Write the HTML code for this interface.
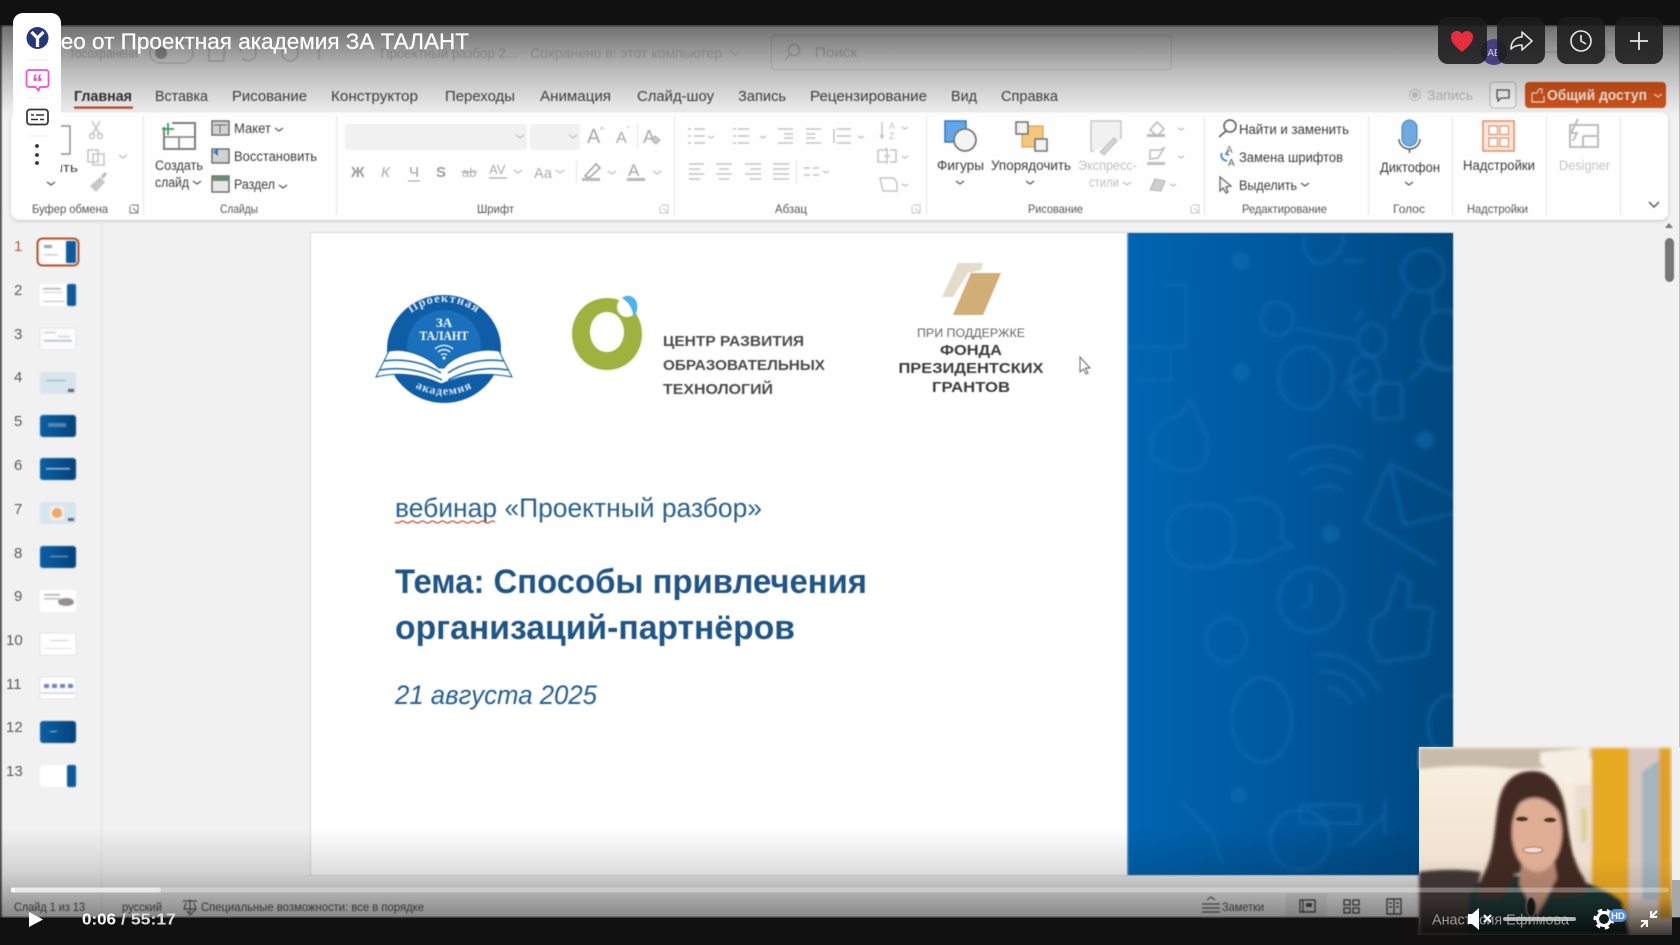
<!DOCTYPE html>
<html lang="ru"><head><meta charset="utf-8"><title>Видео от Проектная академия ЗА ТАЛАНТ</title>
<style>
html,body{margin:0;padding:0;background:#111;width:1680px;height:945px;overflow:hidden}
svg{display:block;font-family:"Liberation Sans",sans-serif}
.t{font-size:14.5px;fill:#444}
.s{font-size:12px;fill:#555}
.r{font-size:13.5px;fill:#3c3c3c}
.st{font-size:12px;fill:#555}
.ic{fill:none;stroke:#9a9a9a;stroke-width:1.5}
.ig{fill:none;stroke:#c4c4c4;stroke-width:1.5}
.sep{stroke:#e6e6e6;stroke-width:1}
.pat{fill:none;stroke:#1a72b8;stroke-opacity:.38;stroke-width:4}
.dot{fill:#1a72b8;fill-opacity:.45}
.ch{fill:none;stroke:#555;stroke-width:1.2}
.chg{fill:none;stroke:#bdbdbd;stroke-width:1.2}
</style></head><body>
<svg width="1680" height="945" viewBox="0 0 1680 945" xmlns="http://www.w3.org/2000/svg">
<defs>
<linearGradient id="top" x1="0" y1="0" x2="0" y2="1"><stop offset="0" stop-color="#000" stop-opacity=".54"/><stop offset=".5" stop-color="#000" stop-opacity=".22"/><stop offset="1" stop-color="#000" stop-opacity="0"/></linearGradient>
<linearGradient id="bot" x1="0" y1="0" x2="0" y2="1"><stop offset="0" stop-color="#000" stop-opacity="0"/><stop offset=".5" stop-color="#000" stop-opacity=".13"/><stop offset="1" stop-color="#000" stop-opacity=".44"/></linearGradient>
<linearGradient id="blue" x1="0" y1="0" x2="1" y2="0"><stop offset="0" stop-color="#0065b1"/><stop offset=".45" stop-color="#00599f"/><stop offset="1" stop-color="#00477e"/></linearGradient>
<linearGradient id="wall" x1="0" y1="0" x2="0" y2="1"><stop offset="0" stop-color="#f8f1e4"/><stop offset=".55" stop-color="#f3e3d2"/><stop offset="1" stop-color="#d8c5b4"/></linearGradient>
<linearGradient id="cam" x1="0" y1="0" x2="0" y2="1"><stop offset="0" stop-color="#000" stop-opacity="0"/><stop offset=".5" stop-color="#000" stop-opacity=".12"/><stop offset="1" stop-color="#000" stop-opacity=".72"/></linearGradient>
<linearGradient id="th" x1="0" y1="0" x2="1" y2="0"><stop offset="0" stop-color="#0b5fa5"/><stop offset="1" stop-color="#06437a"/></linearGradient>
<filter id="b1" x="-10%" y="-10%" width="120%" height="120%"><feGaussianBlur stdDeviation="2"/></filter>
<filter id="b2" x="-20%" y="-20%" width="140%" height="140%"><feGaussianBlur stdDeviation="1.6"/></filter>
<filter id="b3" x="-40%" y="-40%" width="180%" height="180%"><feGaussianBlur stdDeviation=".9"/></filter>
<filter id="sh" x="-5%" y="-20%" width="110%" height="140%"><feDropShadow dx="0" dy="1" stdDeviation="1.5" flood-color="#000" flood-opacity=".2"/></filter>
<clipPath id="cb"><rect x="1127" y="233" width="326" height="642"/></clipPath>
<path id="arcT" d="M392 352 A52 50 0 0 1 496 352"/>
<path id="arcB" d="M396 366 A50 40 0 0 0 492 366"/>
</defs>

<rect width="1680" height="945" fill="#111"/>

<!-- video -->
<g style="filter:blur(.6px)">
<rect x="0" y="26" width="1680" height="891" fill="#f1f1f1"/>
<rect x="0" y="26" width="2" height="891" fill="#6f6f6f"/>

<!-- title bar ghost -->
<g opacity=".5">
<text x="70" y="58" font-size="13.5" fill="#8a8a8a" textLength="68" lengthAdjust="spacingAndGlyphs">тосохранени</text>
<rect x="150" y="43" width="43" height="20" rx="10" fill="none" stroke="#8f8f8f"/><circle cx="161" cy="53" r="6" fill="#5f5f5f"/>
<rect x="209" y="45" width="15" height="16" fill="none" stroke="#9a9a9a" stroke-width="1.4"/>
<path d="M240 52 a8 8 0 1 1 2 6" fill="none" stroke="#a0a0a0" stroke-width="1.4"/>
<circle cx="290" cy="53" r="8" fill="none" stroke="#a0a0a0" stroke-width="1.4"/>
<path d="M312 46h14M319 46v14" fill="none" stroke="#a0a0a0" stroke-width="1.4"/>
<text x="380" y="58" font-size="13.5" fill="#9c9c9c" textLength="137" lengthAdjust="spacingAndGlyphs">Проектный разбор 2...</text>
<text x="530" y="58" font-size="13.5" fill="#a8a8a8" textLength="192" lengthAdjust="spacingAndGlyphs">Сохранено в: этот компьютер</text>
<path d="M730 51l5 4 5-4" class="chg"/>
<rect x="771.500" y="35.500" width="400" height="34" rx="3" fill="none" stroke="#bbb"/>
<circle cx="794" cy="50" r="5.500" fill="none" stroke="#9a9a9a" stroke-width="1.3"/><path d="M790 54l-5 6" stroke="#9a9a9a" stroke-width="1.3"/>
<text x="815" y="57" font-size="14" fill="#999" textLength="42" lengthAdjust="spacingAndGlyphs">Поиск</text>
<path d="M1545 52h16M1600 52h12" stroke="#888" fill="none"/>
<rect x="1595" y="46" width="11" height="11" fill="none" stroke="#999"/>
<path d="M1646 46l11 11M1657 46l-11 11" stroke="#999" fill="none"/>
</g>

<!-- tabs -->
<text x="74" y="101" class="t" font-weight="700" style="fill:#333" textLength="58" lengthAdjust="spacingAndGlyphs">Главная</text>
<rect x="74" y="106.500" width="59" height="2.200" fill="#c2461d"/>
<text x="155" y="101" class="t" textLength="53" lengthAdjust="spacingAndGlyphs">Вставка</text>
<text x="232" y="101" class="t" textLength="75" lengthAdjust="spacingAndGlyphs">Рисование</text>
<text x="331" y="101" class="t" textLength="87" lengthAdjust="spacingAndGlyphs">Конструктор</text>
<text x="445" y="101" class="t" textLength="70" lengthAdjust="spacingAndGlyphs">Переходы</text>
<text x="540" y="101" class="t" textLength="71" lengthAdjust="spacingAndGlyphs">Анимация</text>
<text x="637" y="101" class="t" textLength="77" lengthAdjust="spacingAndGlyphs">Слайд-шоу</text>
<text x="738" y="101" class="t" textLength="48" lengthAdjust="spacingAndGlyphs">Запись</text>
<text x="810" y="101" class="t" textLength="117" lengthAdjust="spacingAndGlyphs">Рецензирование</text>
<text x="951" y="101" class="t" textLength="26" lengthAdjust="spacingAndGlyphs">Вид</text>
<text x="1001" y="101" class="t" textLength="57" lengthAdjust="spacingAndGlyphs">Справка</text>

<circle cx="1415" cy="95" r="5.500" fill="none" stroke="#c8c8c8"/><circle cx="1415" cy="95" r="3" fill="#c8c8c8"/>
<text x="1427" y="100" font-size="14" fill="#bcbcbc" textLength="46" lengthAdjust="spacingAndGlyphs">Запись</text>
<rect x="1490" y="82" width="26" height="26" rx="4" fill="#f8f8f8" stroke="#bdbdbd"/>
<path d="M1497 90h12v8h-8l-3 3v-3h-1z" fill="none" stroke="#555" stroke-width="1.300"/>
<rect x="1525" y="82" width="141" height="26" rx="4" fill="#d2541a"/>
<path d="M1532 93h5l2-4h3v4h-1M1532 93v9h12v-6" fill="none" stroke="#fff" stroke-opacity=".85" stroke-width="1.200"/>
<text x="1547" y="100" font-size="14.500" font-weight="700" fill="#fff" fill-opacity=".9" textLength="100" lengthAdjust="spacingAndGlyphs">Общий доступ</text>
<path d="M1654 94l4 3 4-3" fill="none" stroke="#fff" stroke-opacity=".8" stroke-width="1.200"/>

<!-- ribbon -->
<rect x="11" y="112" width="1657" height="108" rx="8" fill="#fefefe" filter="url(#sh)"/>
<g class="sep">
<path d="M143.500 116v99M336.500 116v99M674.500 116v99M926.500 116v99M1204.500 116v99M1368.500 116v99M1452.500 116v99M1546.500 116v99M1620.500 116v99"/>
</g>

<!-- clipboard -->
<rect x="56" y="126" width="14" height="28" fill="none" stroke="#8a8a8a" stroke-width="1.400"/>
<text x="46" y="172" font-size="13" fill="#444" textLength="32" lengthAdjust="spacingAndGlyphs">вить</text>
<path d="M47 182l4 3 4-3" class="ch"/>
<path d="M92 121l8 14M100 121l-8 14" class="ig"/><circle cx="92" cy="136" r="2.500" class="ig"/><circle cx="100" cy="136" r="2.500" class="ig"/>
<rect x="88" y="150" width="10" height="12" class="ig"/><rect x="93" y="154" width="11" height="11" class="ig"/>
<path d="M119 155l4 3 4-3" class="chg"/>
<path d="M90 186l10-9 5 5-9 10z" fill="#c8c8c8"/><path d="M101 176l4-4 2 2-4 5z" fill="#bbb"/>
<text x="32" y="213" class="s" textLength="76" lengthAdjust="spacingAndGlyphs">Буфер обмена</text>
<path d="M131 205h7v8h-8v-7M133 208l4 4" fill="none" stroke="#777"/>

<!-- slides -->
<path d="M172 123h23v26h-31v-22" fill="none" stroke="#7d7d7d" stroke-width="2"/><path d="M164 137h31M179 137v12" stroke="#7d7d7d" stroke-width="1.600"/>
<path d="M162 129h12M168 123v12" stroke="#3e9a66" stroke-width="1.800"/>
<text x="155" y="170" class="r" textLength="48" lengthAdjust="spacingAndGlyphs">Создать</text>
<text x="155" y="187" class="r" textLength="34" lengthAdjust="spacingAndGlyphs">слайд</text>
<path d="M193 181l4 3 4-3" class="ch"/>
<rect x="212" y="121" width="17" height="14" fill="#d2d2d2" stroke="#666" stroke-width="1.400"/><path d="M214 125h13M220 125v8" stroke="#666"/>
<text x="234" y="133" class="r" textLength="37" lengthAdjust="spacingAndGlyphs">Макет</text>
<path d="M275 128l4 3 4-3" class="ch"/>
<rect x="212" y="149" width="17" height="14" fill="#d2d2d2" stroke="#666" stroke-width="1.400"/><path d="M213 152l5-4v8z" fill="#3b78c4"/>
<text x="234" y="161" class="r" textLength="83" lengthAdjust="spacingAndGlyphs">Восстановить</text>
<rect x="212" y="176" width="17" height="16" fill="#e8e8e8" stroke="#666" stroke-width="1.400"/><rect x="212" y="176" width="17" height="5" fill="#6c8c78"/>
<text x="234" y="189" class="r" textLength="41" lengthAdjust="spacingAndGlyphs">Раздел</text>
<path d="M279 185l4 3 4-3" class="ch"/>
<text x="220" y="213" class="s" textLength="38" lengthAdjust="spacingAndGlyphs">Слайды</text>

<!-- font -->
<rect x="345" y="124" width="182" height="26" rx="3" fill="#f1f1f1"/>
<rect x="530" y="124" width="50" height="26" rx="3" fill="#f1f1f1"/>
<path d="M516 135l4 3 4-3M569 135l4 3 4-3" class="chg"/>
<text x="587" y="143" font-size="20" fill="#a8a8a8">A</text><text x="600" y="133" font-size="9" fill="#a8a8a8">^</text>
<text x="616" y="143" font-size="16" fill="#a8a8a8">A</text><text x="627" y="133" font-size="9" fill="#a8a8a8">ˇ</text>
<path class="sep" d="M637.500 124v24"/>
<text x="643" y="143" font-size="18" fill="#aaa">A</text><path d="M655 136l5 4-4 4-4-4z" fill="#d6c8c8" stroke="#aaa"/>
<text x="351" y="177" font-size="15" font-weight="700" fill="#9a9a9a">Ж</text>
<text x="381" y="177" font-size="15" font-style="italic" fill="#a8a8a8">К</text>
<text x="409" y="177" font-size="15" fill="#a0a0a0">Ч</text><path d="M408 181h12" stroke="#a0a0a0"/>
<text x="436" y="177" font-size="15" font-weight="700" fill="#a0a0a0">S</text>
<text x="462" y="177" font-size="13" fill="#b0b0b0">ab</text><path d="M461 172h16" stroke="#aaa"/>
<text x="489" y="174" font-size="13" fill="#aaa">AV</text><path d="M489 178h18" stroke="#aaa" stroke-width="1.200"/>
<path d="M514 170l4 3 4-3" class="chg"/>
<text x="534" y="178" font-size="14.500" fill="#aaa">Аа</text>
<path d="M556 170l4 3 4-3" class="chg"/>
<path class="sep" d="M576.500 160v24"/>
<path d="M585 176l11-12 4 4-11 10z" fill="none" stroke="#a0a0a0" stroke-width="1.500"/><rect x="582" y="178" width="18" height="3" fill="#b8b8b8"/>
<path d="M608 171l4 3 4-3" class="chg"/>
<text x="628" y="176" font-size="17" fill="#a8a8a8">A</text><rect x="627" y="178" width="18" height="3" fill="#b8b8b8"/>
<path d="M653 171l4 3 4-3" class="chg"/>
<text x="477" y="213" class="s" textLength="37" lengthAdjust="spacingAndGlyphs">Шрифт</text>
<path d="M661 205h7v8h-8v-7M663 208l4 4" fill="none" stroke="#c4c4c4"/>

<!-- paragraph -->
<g class="ig">
<path d="M688 129h3M688 136h3M688 143h3M694 129h11M694 136h11M694 143h11"/>
<path d="M733 129h3M733 136h3M733 143h3M738 129h11M738 136h11M738 143h11"/>
<path d="M778 129h15M784 134h9M784 138h9M778 143h15"/>
<path d="M806 129h15M806 134h9M806 138h9M806 143h15"/>
<path d="M834 129v14M837 129h14M837 136h14M837 143h14"/>
<path d="M689 164h15M689 169h11M689 174h15M689 179h11"/>
<path d="M716 164h16M719 169h10M716 174h16M719 179h10"/>
<path d="M745 164h16M750 169h11M745 174h16M750 179h11"/>
<path d="M773 164h16M773 169h16M773 174h16M773 179h16"/>
<path d="M804 168h6M813 168h6M804 175h6M813 175h6"/>
<path d="M882 122v16M880 135l2 3 2-3"/>
<path d="M878 150h8v-2M890 150h6v12h-6M886 162h-8v-12M887 148v16M884 156h6"/>
<path d="M880 178h14l3 5v8h-14z"/>
</g>
<text x="889" y="129" font-size="9" fill="#c0c0c0">A</text><text x="889" y="139" font-size="9" fill="#c0c0c0">Z</text>
<path d="M708 136l3 2 3-2M760 136l3 2 3-2M858 136l3 2 3-2M823 171l3 2 3-2M902 127l3 2 3-2M902 156l3 2 3-2M902 184l3 2 3-2" class="chg"/>
<path class="sep" d="M796.500 160v24"/>
<text x="775" y="213" class="s" textLength="32" lengthAdjust="spacingAndGlyphs">Абзац</text>
<path d="M913 205h7v8h-8v-7M915 208l4 4" fill="none" stroke="#c4c4c4"/>

<!-- drawing -->
<rect x="945" y="121" width="21" height="21" fill="#62a8e8" stroke="#2e78c8" stroke-width="1.500"/>
<circle cx="965" cy="140" r="11" fill="#f4f4f4" stroke="#777" stroke-width="1.800"/>
<text x="937" y="170" class="r" textLength="47" lengthAdjust="spacingAndGlyphs">Фигуры</text>
<path d="M956 181l4 3 4-3" class="ch" stroke-width="1.500"/>
<rect x="1022" y="126" width="21" height="21" fill="#f4c77c" stroke="#d79a40"/>
<rect x="1016" y="122" width="12" height="12" fill="#f2f2f2" stroke="#777" stroke-width="1.600"/>
<rect x="1035" y="139" width="12" height="12" fill="#f2f2f2" stroke="#777" stroke-width="1.600"/>
<text x="991" y="170" class="r" textLength="80" lengthAdjust="spacingAndGlyphs">Упорядочить</text>
<path d="M1026 181l4 3 4-3" class="ch" stroke-width="1.500"/>
<path d="M1094 151h-3v-30h30v18" fill="#f1f1f1" stroke="#c8c8c8" stroke-width="1.500"/>
<path d="M1100 152l14-14 3 3-13 14z" fill="#d4d4d4" stroke="#bbb"/>
<text x="1078" y="170" font-size="13.500" fill="#c2c2c2" textLength="59" lengthAdjust="spacingAndGlyphs">Экспресс-</text>
<text x="1089" y="187" font-size="13.500" fill="#c2c2c2" textLength="30" lengthAdjust="spacingAndGlyphs">стили</text>
<path d="M1123 182l4 3 4-3" class="chg"/>
<path d="M1150 130l7-8 7 7-7 7z" fill="none" stroke="#b8b8b8" stroke-width="1.500"/><rect x="1147" y="134" width="18" height="3" fill="#bbb"/>
<path d="M1150 159v-9h10l4-2-6 10z" fill="none" stroke="#bbb" stroke-width="1.500"/><rect x="1147" y="162" width="18" height="3" fill="#c0c0c0"/>
<path d="M1150 190l5-11 10 2-4 10z" fill="#cfcfcf" stroke="#b4b4b4"/>
<path d="M1178 128l3 2 3-2M1178 156l3 2 3-2M1170 184l3 2 3-2" class="chg"/>
<text x="1028" y="213" class="s" textLength="55" lengthAdjust="spacingAndGlyphs">Рисование</text>
<path d="M1192 205h7v8h-8v-7M1194 208l4 4" fill="none" stroke="#c4c4c4"/>

<!-- editing -->
<circle cx="1230" cy="126" r="6" fill="none" stroke="#555" stroke-width="1.500"/><path d="M1226 131l-7 6" stroke="#555" stroke-width="1.500"/>
<text x="1239" y="134" class="r" textLength="110" lengthAdjust="spacingAndGlyphs">Найти и заменить</text>
<path d="M1222 153c-2 3 0 7 5 8M1228 151l-2 3 3 1" fill="none" stroke="#3f8ad0" stroke-width="1.800"/><text x="1226" y="153" font-size="10" fill="#777">A</text><text x="1228" y="166" font-size="10" fill="#555">A</text>
<text x="1239" y="162" class="r" textLength="104" lengthAdjust="spacingAndGlyphs">Замена шрифтов</text>
<path d="M1220 177l11 9-5 1 2 5-2 1-3-5-3 3z" fill="#f6f6f6" stroke="#666" stroke-width="1.300"/>
<text x="1239" y="190" class="r" textLength="58" lengthAdjust="spacingAndGlyphs">Выделить</text>
<path d="M1301 183l4 3 4-3" class="ch"/>
<text x="1242" y="213" class="s" textLength="85" lengthAdjust="spacingAndGlyphs">Редактирование</text>

<!-- voice -->
<rect x="1402" y="120" width="15" height="26" rx="7.500" fill="#6fa9e0" stroke="#3f7fc6"/>
<path d="M1399 139a10.500 10 0 0 0 21 0M1409.500 149v4" fill="none" stroke="#5e5e5e" stroke-width="1.500"/>
<text x="1380" y="172" class="r" textLength="60" lengthAdjust="spacingAndGlyphs">Диктофон</text>
<path d="M1405 182l4 3 4-3" class="ch" stroke-width="1.500"/>
<text x="1393" y="213" class="s" textLength="32" lengthAdjust="spacingAndGlyphs">Голос</text>

<!-- addins -->
<rect x="1483" y="121" width="31" height="30" fill="#fce8de" stroke="#e88a60" stroke-width="1.500"/>
<rect x="1489" y="126" width="8.500" height="8.500" fill="#fff" stroke="#e08050"/><rect x="1500" y="126" width="8.500" height="8.500" fill="#fff" stroke="#e08050"/>
<rect x="1489" y="138" width="8.500" height="8.500" fill="#fff" stroke="#e08050"/><rect x="1500" y="138" width="8.500" height="8.500" fill="#fff" stroke="#e08050"/>
<text x="1463" y="170" class="r" textLength="72" lengthAdjust="spacingAndGlyphs">Надстройки</text>
<text x="1467" y="213" class="s" textLength="61" lengthAdjust="spacingAndGlyphs">Надстройки</text>
<path d="M1570 125h28v22h-28zM1583 136h15M1583 136v11M1578 119l-7 14h6l-4 8" fill="none" stroke="#bcbcbc" stroke-width="2"/>
<text x="1559" y="170" font-size="13.500" fill="#c4c4c4" textLength="51" lengthAdjust="spacingAndGlyphs">Designer</text>
<path d="M1649 202l5 5 5-5" fill="none" stroke="#555" stroke-width="1.400"/>

<!-- left pane -->
<path d="M101.500 222v695" stroke="#e3e3e3"/>
<g font-size="15" fill="#5c5c5c">
<text x="14" y="251" fill="#c8563a">1</text><text x="14" y="295">2</text><text x="14" y="339">3</text><text x="14" y="382">4</text><text x="14" y="426">5</text><text x="14" y="470">6</text><text x="14" y="514">7</text><text x="14" y="558">8</text><text x="14" y="601">9</text><text x="6" y="645">10</text><text x="6" y="689">11</text><text x="6" y="732">12</text><text x="6" y="776">13</text>
</g>
<rect x="37.500" y="238.500" width="41" height="27" rx="5" fill="none" stroke="#b8552e" stroke-width="2"/>
<g style="filter:blur(.6px)">
<rect x="40" y="241" width="36" height="22" rx="2" fill="#fff"/><rect x="66" y="241" width="10" height="22" rx="1" fill="#0b5a9c"/><rect x="44" y="245" width="8" height="3" fill="#8ca0bc"/><rect x="44" y="254" width="14" height="1.500" fill="#ccc"/>
<rect x="40" y="284" width="36" height="22" rx="2" fill="#fff"/><rect x="67" y="284" width="9" height="22" rx="2" fill="#0b5a9c"/><rect x="43" y="288" width="18" height="1.500" fill="#aab"/><rect x="43" y="292" width="20" height="1" fill="#ccc"/><rect x="43" y="301" width="22" height="1" fill="#bbb"/>
<rect x="40" y="328" width="36" height="22" rx="2" fill="#fbfbfb" stroke="#e4e4e4"/><rect x="44" y="340" width="28" height="1.500" fill="#a8b8c8"/><rect x="44" y="332" width="12" height="1" fill="#bbb"/><rect x="58" y="336" width="12" height="1" fill="#bbb"/>
<rect x="40" y="372" width="36" height="22" rx="3" fill="#d7e5ee"/><rect x="46" y="380" width="20" height="1" fill="#8fa9c0"/><rect x="68" y="389" width="6" height="3" fill="#567"/>
<rect x="40" y="415" width="36" height="22" rx="3" fill="url(#th)"/><rect x="48" y="423" width="18" height="4" fill="#4f86b4"/>
<rect x="40" y="458" width="36" height="22" rx="3" fill="url(#th)"/><rect x="46" y="468" width="24" height="1.500" fill="#a8c4da"/>
<rect x="40" y="502" width="36" height="22" rx="3" fill="#d7e5ee"/><rect x="50" y="506" width="14" height="14" rx="2" fill="#f4f0ea"/><circle cx="57" cy="513" r="5" fill="#f0a56a"/><rect x="68" y="518" width="6" height="3" fill="#567"/>
<rect x="40" y="546" width="36" height="22" rx="3" fill="url(#th)"/><rect x="50" y="556" width="18" height="1" fill="#8fb2cf"/>
<rect x="40" y="590" width="36" height="22" rx="2" fill="#fff"/><rect x="44" y="594" width="16" height="1.500" fill="#aaa"/><rect x="44" y="598" width="16" height="1.500" fill="#bbb"/><ellipse cx="66" cy="602" rx="8" ry="4" fill="#9a8c96"/>
<rect x="40" y="633" width="36" height="22" rx="2" fill="#fff" stroke="#e4e4e4"/><rect x="50" y="640" width="18" height="1" fill="#ccc"/><rect x="44" y="648" width="28" height="1" fill="#ddd"/>
<rect x="40" y="677" width="36" height="22" rx="2" fill="#fff" stroke="#e4e4e4"/><path d="M44 686h5M52 686h5M60 686h5M68 686h5" stroke="#7080b8" stroke-width="4"/><path d="M41 693h34" stroke="#bbb"/>
<rect x="40" y="721" width="36" height="22" rx="3" fill="url(#th)"/><rect x="50" y="731" width="7" height="1" fill="#a9c5dc"/>
<rect x="40" y="765" width="36" height="22" rx="3" fill="#fff"/><rect x="67" y="765" width="9" height="22" rx="2" fill="#0b5a9c"/>
</g>

<!-- slide -->
<rect x="310.500" y="232.500" width="1143" height="643" fill="none" stroke="#dadada"/>
<rect x="311" y="233" width="816" height="642" fill="#fff"/>
<rect x="1127" y="233" width="326" height="642" fill="url(#blue)"/>
<g clip-path="url(#cb)"><g filter="url(#b1)">
<g class="pat">
<path d="M1305 234c-3 15 2 28 14 29 14 0 25-12 24-29"/><path d="M1343 261h22"/><circle cx="1423" cy="271" r="21"/>
<path d="M1408 290l-16 30M1432 290l2 22"/><path d="M1164 285h22v62h-60" /><path d="M1171 350v30h-35"/>
<ellipse cx="1277" cy="319" rx="16" ry="17"/><path d="M1295 328l60 12"/><path d="M1356 320l7-10"/><ellipse cx="1372" cy="340" rx="14" ry="16"/>
<ellipse cx="1306" cy="378" rx="27" ry="31"/><path d="M1340 385l28-15"/><ellipse cx="1365" cy="375" rx="15" ry="20"/><path d="M1347 388l15 20"/>
<rect x="1374" y="383" width="28" height="36" rx="5"/><path d="M1410 380l16-15"/><path d="M1416 360l35 10"/><ellipse cx="1444" cy="340" rx="22" ry="30"/>
<path d="M1190 400l-10 15c-22 5-33 22-28 40 4 12 30 20 48 12 10-10 10-30 2-42z"/>
<path d="M1288 460c20-18 55-18 75-2M1300 475c15-12 38-12 52 0M1312 490c10-6 22-6 30 0"/>
<path d="M1389 463l-24 58 72 44M1389 463l67 34M1389 463l15 62 52-12"/>
<rect x="1168" y="505" width="66" height="62" rx="24"/><path d="M1236 502c20-8 42 0 46 16v20l10 8-18 4c-8 12-30 14-52 10"/>
<circle cx="1311" cy="600" r="32"/><path d="M1311 582v22l-10 4"/>
<path d="M1398 575l12 8-2 24h16c8 0 10 4 8 8l-4 35c0 4-6 7-12 7l-36 5-10-20 2-22 14-8z"/>
<ellipse cx="1226" cy="640" rx="20" ry="22"/>
<path d="M1314 655c28-4 52 12 66 36M1320 672c18-2 36 6 44 26M1327 688c10 0 18 6 24 16"/>
<ellipse cx="1262" cy="720" rx="30" ry="42"/><ellipse cx="1450" cy="725" rx="22" ry="30"/>
<path d="M1300 805h60M1300 805v18h60v-18M1385 815l-36 32M1385 800v35"/><circle cx="1300" cy="840" r="30"/><path d="M1180 800l32 34 10 30"/>
</g>
<circle class="dot" cx="1241" cy="261" r="9"/><circle class="dot" cx="1241" cy="372" r="9"/><circle class="dot" cx="1425" cy="440" r="9"/><circle class="dot" cx="1331" cy="534" r="9"/><circle class="dot" cx="1239" cy="795" r="8"/>
</g></g>
<rect x="1127" y="233" width="1.500" height="642" fill="#4aa0dc"/>

<!-- badge logo -->
<ellipse cx="444" cy="349" rx="57" ry="54" fill="#0e5da6"/>
<ellipse cx="444" cy="346" rx="37" ry="36" fill="#1a70ba"/>
<text font-family="Liberation Serif,serif" font-size="12.500" font-weight="700" fill="#dbe8f4" letter-spacing="1"><textPath href="#arcT" startOffset="50%" text-anchor="middle">Проектная</textPath></text>
<text x="444" y="327" text-anchor="middle" font-family="Liberation Serif,serif" font-size="13" font-weight="700" fill="#fff">ЗА</text>
<text x="444" y="340" text-anchor="middle" font-family="Liberation Serif,serif" font-size="13" font-weight="700" fill="#fff" textLength="49" lengthAdjust="spacingAndGlyphs">ТАЛАНТ</text>
<path d="M435 349a13 13 0 0 1 18 0M438 352a9 9 0 0 1 12 0M441 355a5 5 0 0 1 6 0" fill="none" stroke="#fff" stroke-width="1.300"/><circle cx="444" cy="358" r="1.500" fill="#fff"/>
<path d="M439 368c-14-14-36-20-50-17l-13 26c20-5 44-3 63 6 2 1 3 1 5 0 19-9 43-11 68-6l-13-26c-18-3-44 3-55 17z" fill="#fff" stroke="#0e5da6" stroke-width="1"/>
<path d="M384 361c20-3 42 2 57 12M380 370c22-4 44 1 62 10M504 361c-20-3-42 2-56 12M508 370c-22-4-44 1-60 10" fill="none" stroke="#1568ae" stroke-width="1.500"/>
<text font-family="Liberation Serif,serif" font-size="12" font-weight="700" fill="#dbe8f4" letter-spacing="1"><textPath href="#arcB" startOffset="50%" text-anchor="middle">академия</textPath></text>

<!-- ring logo -->
<path fill-rule="evenodd" d="M607 298c20 0 35 16 35 36s-15 36-35 36-35-16-35-36 15-36 35-36zm0 14c-10 0-17 9-17 20s7 20 17 20 17-9 17-20-7-20-17-20z" fill="#9fb240"/>
<circle cx="627" cy="307" r="10" fill="#fff"/>
<path d="M622 298c6-5 14-1 15 6s-1 10-4 12c0-8-5-14-11-18z" fill="#4db2ea"/>
<g font-weight="700" fill="#4c4c4c" font-size="15">
<text x="663" y="346" textLength="141" lengthAdjust="spacingAndGlyphs">ЦЕНТР РАЗВИТИЯ</text>
<text x="663" y="370" textLength="162" lengthAdjust="spacingAndGlyphs">ОБРАЗОВАТЕЛЬНЫХ</text>
<text x="663" y="394" textLength="110" lengthAdjust="spacingAndGlyphs">ТЕХНОЛОГИЙ</text>
</g>

<!-- FPG logo -->
<path d="M958 263h25l-2 7-13 3-15 24h-11z" fill="#e4dccb"/>
<path d="M971 273h30l-18 42h-30z" fill="#d0ae76"/>
<text x="971" y="337" text-anchor="middle" font-size="12" fill="#666" textLength="108" lengthAdjust="spacingAndGlyphs">ПРИ ПОДДЕРЖКЕ</text>
<g font-weight="700" fill="#3c3c3c" font-size="15" text-anchor="middle">
<text x="971" y="355" textLength="62" lengthAdjust="spacingAndGlyphs">ФОНДА</text>
<text x="971" y="373" textLength="145" lengthAdjust="spacingAndGlyphs">ПРЕЗИДЕНТСКИХ</text>
<text x="971" y="392" textLength="78" lengthAdjust="spacingAndGlyphs">ГРАНТОВ</text>
</g>
<path d="M1080 357v15l3.500-3 2.500 5 2-1-2.500-5h4.500z" fill="#fff" stroke="#666"/>

<!-- slide text -->
<text x="395" y="517" font-size="27" fill="#265f91" textLength="367" lengthAdjust="spacingAndGlyphs">вебинар «Проектный разбор»</text>
<path d="M395 522q2.500 2 5 0t5 0 5 0 5 0 5 0 5 0 5 0 5 0 5 0 5 0 5 0 5 0 5 0 5 0 5 0 5 0 5 0 5 0 5 0 5 0" fill="none" stroke="#c8503c" stroke-width="1.200"/>
<text x="395" y="593" font-size="34" font-weight="700" fill="#1f5486" textLength="472" lengthAdjust="spacingAndGlyphs">Тема: Способы привлечения</text>
<text x="395" y="639" font-size="34" font-weight="700" fill="#1f5486" textLength="400" lengthAdjust="spacingAndGlyphs">организаций-партнёров</text>
<text x="395" y="704" font-size="27" font-style="italic" fill="#265f91" textLength="202" lengthAdjust="spacingAndGlyphs">21 августа 2025</text>

<!-- scrollbar -->
<path d="M1669 223l4 5h-8z" fill="#777"/><rect x="1665" y="238" width="9" height="44" rx="4.500" fill="#777"/>

<!-- status bar -->
<text x="14" y="911" class="st" textLength="71" lengthAdjust="spacingAndGlyphs">Слайд 1 из 13</text>
<text x="122" y="911" class="st" textLength="40" lengthAdjust="spacingAndGlyphs">русский</text>
<path d="M183 901h14M190 899v14M186 903l-2 6h12l-2-6M187 911l3 4 6-6" fill="none" stroke="#666" stroke-width="1.200"/>
<text x="201" y="911" class="st" textLength="223" lengthAdjust="spacingAndGlyphs">Специальные возможности: все в порядке</text>
<path d="M1202 904h18M1202 908h18M1202 912h18M1207 900l4-3 4 3" fill="none" stroke="#666" stroke-width="1.300"/>
<text x="1222" y="911" class="st" textLength="42" lengthAdjust="spacingAndGlyphs">Заметки</text>
<rect x="1286" y="893" width="41" height="24" fill="#000" fill-opacity=".05"/>
<path d="M1300 900h15v12h-15zM1303 900v12" fill="none" stroke="#555" stroke-width="1.400"/><rect x="1306" y="903" width="6" height="4" fill="#555"/>
<g fill="none" stroke="#555" stroke-width="1.400"><rect x="1344" y="900" width="6" height="5"/><rect x="1353" y="900" width="6" height="5"/><rect x="1344" y="908" width="6" height="5"/><rect x="1353" y="908" width="6" height="5"/>
<path d="M1387 899h14v15h-14zM1394 899v15M1389 903h3M1389 907h3M1396 903h3M1396 907h3"/></g>
</g>

<!-- gradients -->
<rect x="0" y="26" width="1680" height="90" fill="url(#top)"/>
<rect x="0" y="828" width="1680" height="89" fill="url(#bot)"/>

<!-- webcam -->
<rect x="1419" y="747" width="253" height="188" fill="url(#wall)"/>
<g filter="url(#b2)">
<path d="M1419 748h175v10l-40 8c-20 4-40 3-60 1-25-2-50-1-75 2z" fill="#c9bbab"/>
<path d="M1540 752l50-4v30l-25 5-25-20z" fill="#f6efe3"/>
<rect x="1575" y="785" width="17" height="70" fill="#ebdfd1"/>
<path d="M1581 808h6v34h-6z" fill="#d8cf86" opacity=".8"/>
<rect x="1592" y="748" width="37" height="170" fill="#e6a920"/>
<rect x="1629" y="748" width="30" height="165" fill="#d8c8c1"/>
<path d="M1642 772l17-12v140h-17z" fill="#a3b5bf"/>
<rect x="1659" y="748" width="12" height="170" fill="#dfa226"/>
<path d="M1419 872c20-3 45-3 62 0l-15 63h-47z" fill="#3f3734"/>
<path d="M1466 935l4-40c4-10 14-18 24-20l70 2c20 4 44 12 58 24l7 34z" fill="#1b3632"/>
<path d="M1533 771c-14 0-25 6-31 20-6 14-6 36-9 52-2 14-6 26-12 36l-3 18c8 3 18 2 30-3l6-20 30-2 8 22c14 4 26 2 36-4l-4-12c-10-14-14-34-17-58-3-30-14-49-34-49z" fill="#432a20"/>
<path d="M1522 862l32-2 3 18-20 38-18-32z" fill="#b98a72"/>
<ellipse cx="1537" cy="832" rx="25" ry="40" fill="#dfae95"/>
<path d="M1510 816c3-16 12-28 25-28 14 0 24 12 28 30-8-13-18-20-28-20-12 0-20 8-25 18z" fill="#432a20"/>
</g>
<g filter="url(#b3)">
<ellipse cx="1522" cy="819" rx="6" ry="2.200" fill="#4b3024"/><ellipse cx="1550" cy="820" rx="6" ry="2.200" fill="#4b3024"/>
<ellipse cx="1533" cy="850" rx="10" ry="3" fill="#efe0d8" stroke="#a9604f"/>
<ellipse cx="1531" cy="907" rx="5" ry="10" fill="#1c1c1c" stroke="#8f8380"/>
</g>
<rect x="1419" y="860" width="253" height="75" fill="url(#cam)"/>
<rect x="1672" y="747" width="8" height="170" fill="#efefef"/>
<rect x="1672" y="880" width="8" height="37" fill="#000" opacity=".3"/>
<rect x="1419" y="935" width="261" height="10" fill="#111"/>

<!-- title -->
<text x="20" y="49" font-size="22" fill="#fff" stroke="#fff" stroke-width=".2" textLength="449" lengthAdjust="spacingAndGlyphs">Видео от Проектная академия ЗА ТАЛАНТ</text>

<!-- avatar and buttons -->
<circle cx="1494" cy="52" r="13" fill="#46407e"/>
<text x="1494" y="56" text-anchor="middle" font-size="10" fill="#cfcfe6">АЕ</text>
<g fill="#1b1b1b" fill-opacity=".88">
<rect x="1438" y="17" width="49" height="47" rx="10"/><rect x="1497" y="17" width="48" height="47" rx="10"/><rect x="1557" y="17" width="48" height="47" rx="10"/><rect x="1615" y="17" width="48" height="47" rx="10"/>
</g>
<path d="M1462 52c-3-3-11-8-11-15 0-4 3-6 6-6 2 0 4 1 5 3 1-2 3-3 5-3 3 0 6 2 6 6 0 7-8 12-11 15z" fill="#e62f3e"/>
<path d="M1522 32l10 9-10 9v-5c-5 0-8 1-11 4 0-7 4-12 11-12z" fill="none" stroke="#e4e4e4" stroke-width="1.600" stroke-linejoin="round"/>
<circle cx="1581" cy="41" r="10" fill="none" stroke="#e8e8e8" stroke-width="1.600"/><path d="M1581 35v6l5 3" fill="none" stroke="#e8e8e8" stroke-width="1.600"/>
<path d="M1639 32v18M1630 41h18" stroke="#e8e8e8" stroke-width="1.800"/>

<!-- side panel -->
<rect x="13" y="13" width="48" height="164" rx="10" fill="#fff"/>
<circle cx="37.500" cy="38" r="11" fill="#23387f"/>
<path d="M31.500 32l6 6 6-6M37.500 38v9" fill="none" stroke="#fff" stroke-width="3.200"/>
<path d="M28 60h19M28 98h19M28 136h19" stroke="#ececec"/>
<path d="M29 70h17a2.500 2.500 0 0 1 2.500 2.500v12a2.500 2.500 0 0 1-2.500 2.500h-6l-1.500 3.500-3-3.500H29a2.500 2.500 0 0 1-2.500-2.500v-12A2.500 2.500 0 0 1 29 70z" fill="#fff" stroke="#f04fcf" stroke-width="1.700"/>
<text x="37.500" y="90" text-anchor="middle" font-size="22" font-weight="700" fill="#f04fcf">“</text>
<rect x="27" y="109.500" width="21" height="15" rx="3" fill="#fff" stroke="#333" stroke-width="1.700"/>
<path d="M31 115h3M36 115h8M31 119.500h7M40 119.500h4" stroke="#333" stroke-width="1.500"/>
<circle cx="37" cy="146" r="1.900" fill="#333"/><circle cx="37" cy="155" r="1.900" fill="#333"/><circle cx="37" cy="163" r="1.900" fill="#333"/>

<!-- player -->
<rect x="11" y="887.500" width="1658" height="5" rx="2.500" fill="#fff" fill-opacity=".32"/>
<rect x="11" y="887.500" width="150" height="5" rx="2.500" fill="#fff" fill-opacity=".55"/>
<rect x="11" y="887.500" width="4" height="5" rx="2" fill="#fff"/>
<path d="M29 912l14 7.500-14 7.500z" fill="#fff"/>
<text x="82" y="924.500" font-size="16" font-weight="700" fill="#fff" textLength="34" lengthAdjust="spacingAndGlyphs">0:06</text>
<text x="121" y="924.500" font-size="16" font-weight="700" fill="#ddd" textLength="55" lengthAdjust="spacingAndGlyphs">/ 55:17</text>
<text x="1432" y="924.500" font-size="15" fill="#9a9a9a" textLength="137" lengthAdjust="spacingAndGlyphs">Анастасия Ефимова</text>
<path d="M1468 914h4l7-6v22l-7-6h-4z" fill="#fff"/>
<path d="M1484 915l7 7M1491 915l-7 7" stroke="#fff" stroke-width="2"/>
<rect x="1503" y="917" width="73" height="4" rx="2" fill="#ccc" fill-opacity=".85"/>
<circle cx="1604" cy="919" r="6.500" fill="none" stroke="#fff" stroke-width="3"/>
<circle cx="1604" cy="919" r="9" fill="none" stroke="#fff" stroke-width="3" stroke-dasharray="4.200 4.800"/>
<rect x="1609" y="909" width="18" height="13" rx="6.500" fill="#4f8cf0"/>
<text x="1618" y="919" text-anchor="middle" font-size="9.500" font-weight="700" fill="#fff">HD</text>
<path d="M1657 911l-6 6M1651 911v6h6M1641 927l6-6M1641 921h6v6" fill="none" stroke="#fff" stroke-width="2"/>
</svg>
</body></html>
